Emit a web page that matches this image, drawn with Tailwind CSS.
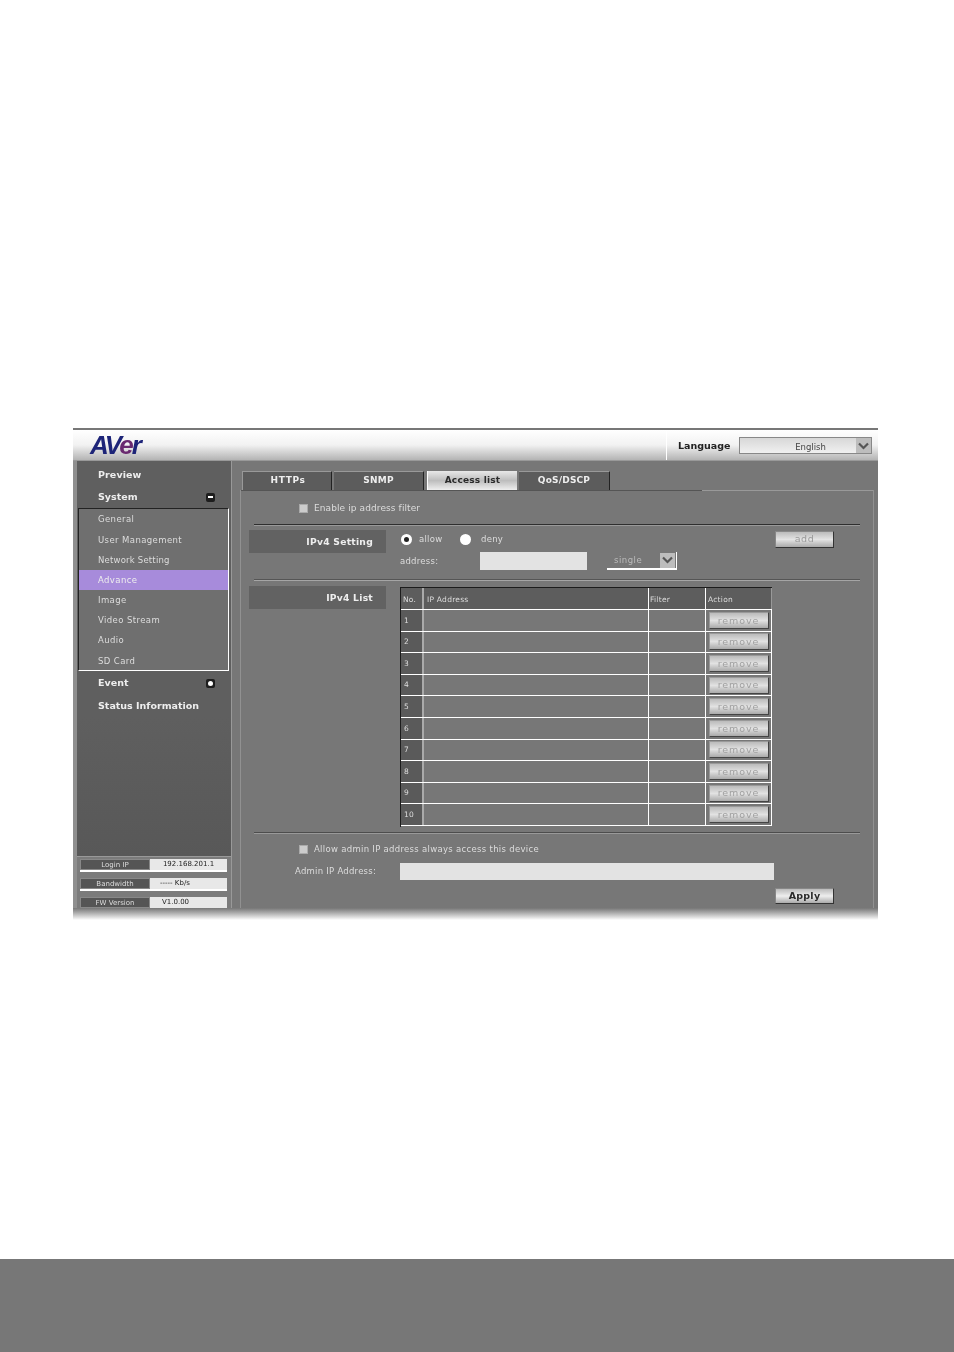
<!DOCTYPE html>
<html lang="en">
<head>
  <meta charset="UTF-8" />
  <title>AVer - Access list</title>
  <script src="https://cdn.jsdelivr.net/npm/@tailwindcss/browser@4"></script>
</head>
<body class="bg-white font-['DejaVu_Sans',sans-serif]">
<div class="w-[954px] h-[1352px] flex flex-col overflow-hidden">

  <div class="flex-1 pt-[428px] pl-[73px]">
    <div class="w-[805px] h-[480px] bg-[#777] flex flex-col blur-[0.45px]">

      <!-- Header -->
      <header class="h-[33px] shrink-0 border-t-2 border-[#777] border-b border-b-[#999] bg-gradient-to-b from-white via-[#f2f2f2] to-[#b4b4b4] flex items-center">
        <span class="ml-[17px] w-[576px] text-[26px] leading-none font-bold italic tracking-[-2px] text-[#1d2478] font-['Liberation_Sans',sans-serif]">AV<span class="text-[#6a2a70]">e</span>r</span>
        <div class="h-[29px] w-px bg-[#777] border-r border-white"></div>
        <span class="ml-[11px] w-[61px] text-[9.5px] font-bold text-[#222] pt-[3px]">Language</span>
        <div class="w-[133px] h-[17px] mt-[1px] border border-[#888] bg-gradient-to-b from-[#d8d8d8] to-[#f0f0f0] flex items-center">
          <span class="flex-1 text-center text-[8.5px] text-[#444] pl-[25px] pt-[3px]">English</span>
          <div class="w-[15px] h-[15px] bg-[#bdbdbd] flex items-center justify-center">
            <svg width="11" height="8" viewBox="0 0 11 8"><path d="M1 1.5 L5.5 6 L10 1.5" fill="none" stroke="#555" stroke-width="2.2"/></svg>
          </div>
        </div>
      </header>

      <div class="flex-1 flex min-h-0">
        <!-- Sidebar -->
        <aside class="w-[158px] shrink-0 flex border-l-[4px] border-[#8f8f8f]">
          <div class="w-[154px] bg-[#5f5f5f] flex flex-col text-[9.5px] font-bold text-[#eee]">
            <div class="h-[25px] pl-[21px] pt-[3px] flex items-center tracking-[0.1px]">Preview</div>
            <div class="h-[22px] pl-[21px] pr-[16px] flex items-center justify-between">
              <span>System</span>
              <span class="w-[9px] h-[9px] rounded-[2px] bg-[#1d1d1d] flex items-center justify-center"><span class="w-[5px] h-[2px] bg-white"></span></span>
            </div>
            <nav class="h-[163px] ml-[1px] w-[151px] bg-[#6f6f6f] border-l border-t border-[#222] border-r border-b border-r-white border-b-white font-normal text-[8.5px] text-[#ddd] tracking-[0.4px] flex flex-col">
              <div class="h-[20px] pl-[19px] flex items-center">General</div>
              <div class="h-[21px] pl-[19px] pt-[1px] flex items-center">User Management</div>
              <div class="h-[20px] pl-[19px] flex items-center tracking-[0.2px]">Network Setting</div>
              <div class="h-[20px] pl-[19px] flex items-center bg-[#a78bdb] text-[#eee]">Advance</div>
              <div class="h-[20px] pl-[19px] flex items-center">Image</div>
              <div class="h-[20px] pl-[19px] flex items-center">Video Stream</div>
              <div class="h-[20px] pl-[19px] flex items-center">Audio</div>
              <div class="h-[20px] pl-[19px] pt-[2px] flex items-center">SD Card</div>
            </nav>
            <div class="h-[25px] pl-[21px] pr-[16px] flex items-center justify-between">
              <span>Event</span>
              <span class="w-[9px] h-[9px] rounded-[2px] bg-[#1d1d1d] flex items-center justify-center"><span class="w-[5px] h-[5px] bg-white rounded-full"></span></span>
            </div>
            <div class="h-[21px] pl-[21px] flex items-center">Status Information</div>
            <div class="flex-1 bg-gradient-to-b from-[#5f5f5f] to-[#585858]"></div>
            <!-- Status boxes -->
            <div class="h-[52px] shrink-0 bg-[#7b7b7b] border-t border-[#999] pl-[3px] pr-[4px] pt-[2px] overflow-hidden flex flex-col gap-[6px] text-[7px] font-normal text-[#222]">
              <div class="h-[13px] shrink-0 flex border-b-2 border-white bg-[#e8e8e8]">
                <span class="w-[70px] bg-[#555] border border-[#888] text-[#ddd] text-center leading-[10px]">Login IP</span>
                <span class="flex-1 text-center leading-[11px]">192.168.201.1</span>
              </div>
              <div class="h-[13px] shrink-0 flex border-b-2 border-white bg-[#e8e8e8]">
                <span class="w-[70px] bg-[#555] border border-[#888] text-[#ddd] text-center leading-[10px]">Bandwidth</span>
                <span class="flex-1 pl-[10px] leading-[11px]">----- Kb/s</span>
              </div>
              <div class="h-[13px] shrink-0 flex border-b-2 border-white bg-[#e8e8e8]">
                <span class="w-[70px] bg-[#555] border border-[#888] text-[#ddd] text-center leading-[10px]">FW Version</span>
                <span class="flex-1 pl-[12px] leading-[11px]">V1.0.00</span>
              </div>
            </div>
          </div>
        </aside>

        <!-- Main -->
        <main class="flex-1 border-l border-[#999] pl-[1px] min-w-0 flex flex-col bg-[#777]">
          <!-- Tabs -->
          <div class="h-[29px] shrink-0 pt-[10px] pl-[9px] flex gap-[2px] text-[9px] font-bold tracking-[0.2px]">
            <div class="w-[90px] bg-[#5c5c5c] border-l border-t border-r border-[#999] border-r-[#222] text-[#eee] tracking-[0.6px] pl-[2px] flex items-center justify-center">HTTPs</div>
            <div class="w-[90px] bg-[#5c5c5c] border-t border-r border-[#999] border-r-[#222] text-[#eee] flex items-center justify-center">SNMP</div>
            <div class="w-[90px] ml-[1px] bg-gradient-to-b from-[#e8e8e8] via-[#bdbdbd] to-[#eee] border-l border-[#fff] text-[#2a2a2a] flex items-center justify-center">Access list</div>
            <div class="w-[91px] bg-[#5c5c5c] border-t border-r border-[#999] border-r-[#222] text-[#eee] flex items-center justify-center">QoS/DSCP</div>
          </div>

          <!-- Panel -->
          <div class="flex-1 ml-[7px] mr-[4px] border-l border-r border-[#919191] min-h-0 text-[8.5px] text-[#ddd] tracking-[0.25px]">
            <div class="h-px flex">
              <div class="w-[461px] bg-[#555]"></div>
              <div class="flex-1 bg-[#999]"></div>
            </div>
            <div class="h-[33px] pl-[58px] pt-[2px] flex items-center gap-[6px]">
              <span class="w-[9px] h-[9px] bg-[#ccc] border border-[#aaa]"></span>
              <span class="text-[9px] tracking-[0.1px]">Enable ip address filter</span>
            </div>
            <div class="h-[2px] ml-[13px] w-[606px] bg-[#2f2f2f] border-b border-[#999]"></div>

            <div class="h-[53px] pt-[4px] pl-[8px] flex">
              <div class="w-[137px] h-[23px] bg-[#626262] font-bold text-[9.2px] text-[#eee] flex items-center justify-end pr-[13px]">IPv4 Setting</div>
              <div class="ml-[14px] w-[434px] flex flex-col">
                <div class="h-[18px] flex items-center">
                  <span class="ml-[1px] w-[11px] h-[11px] rounded-full bg-white flex items-center justify-center"><span class="w-[5px] h-[5px] rounded-full bg-[#222]"></span></span>
                  <span class="ml-[7px] w-[41px]">allow</span>
                  <span class="w-[11px] h-[11px] rounded-full bg-white"></span>
                  <span class="ml-[10px] flex-1">deny</span>
                  <button class="w-[59px] h-[17px] bg-gradient-to-b from-[#bbb] via-[#e4e4e4] to-[#aaa] border border-[#888] border-b-[#333] border-r-[#333] text-[9.5px] text-[#999] tracking-[0.6px]">add</button>
                </div>
                <div class="mt-[4px] h-[18px] flex items-center">
                  <span class="w-[80px] pt-[1px]">address:</span>
                  <span class="w-[107px] h-[18px] bg-[#e3e3e3]"></span>
                  <div class="ml-[20px] w-[70px] h-[18px] bg-[#777] border-b-2 border-r border-white flex items-center pl-[7px] pr-[1px]">
                    <span class="flex-1 text-[#bbb] tracking-[0.5px] pt-[1px]">single</span>
                    <span class="w-[15px] h-[15px] bg-[#bdbdbd] flex items-center justify-center">
                      <svg width="11" height="8" viewBox="0 0 11 8"><path d="M1 1.5 L5.5 6 L10 1.5" fill="none" stroke="#555" stroke-width="2.2"/></svg>
                    </span>
                  </div>
                </div>
              </div>
            </div>
            <div class="h-[2px] ml-[13px] w-[606px] bg-[#555] border-b border-[#a5a5a5]"></div>

            <div class="pt-[5px] pl-[8px] flex h-[251px]">
              <div class="w-[137px] h-[23px] bg-[#626262] font-bold text-[9.2px] text-[#eee] flex items-center justify-end pr-[13px]">IPv4 List</div>
              <div id="ipTable" class="ml-[14px] mt-[1px] w-[372px] h-[240px] border-l border-t border-[#1c1c1c] text-[7.5px] flex flex-col"></div>
            </div>
            <div class="h-[2px] ml-[13px] w-[606px] bg-[#4d4d4d] border-b border-[#999]"></div>

            <div class="h-[29px] pl-[58px] pt-[1px] flex items-center gap-[6px]">
              <span class="w-[9px] h-[9px] bg-[#ccc] border border-[#aaa]"></span>
              <span class="tracking-[0.3px]">Allow admin IP address always access this device</span>
            </div>
            <div class="h-[17px] flex items-center">
              <span class="ml-[54px] w-[105px]">Admin IP Address:</span>
              <span class="w-[374px] h-[17px] bg-[#e3e3e3]"></span>
            </div>
            <div class="pl-[534px] pt-[8px]">
              <button class="w-[59px] h-[16px] bg-gradient-to-b from-[#bbb] via-[#eee] to-[#aaa] border border-[#888] border-b-[#333] border-r-[#333] text-[9.5px] font-bold text-[#2a2a2a] leading-none">Apply</button>
            </div>
          </div>
        </main>
      </div>
    </div>
    <!-- Soft shadow below the screenshot -->
    <div class="w-[805px] h-[12px] bg-gradient-to-b from-[#777] to-white"></div>
  </div>

  <!-- Bottom band -->
  <div class="h-[93px] shrink-0 bg-[#777]"></div>
</div>

<script>
  const rows = ["1", "2", "3", "4", "5", "6", "7", "8", "9", "10"];
  let html = `
    <div class="h-[22px] shrink-0 flex bg-[#5d5d5d] border-b border-white">
      <div class="w-[23px] pl-[2px] pt-[2px] border-r-2 border-[#aaa] flex items-center">No.</div>
      <div class="w-[225px] pl-[3px] pt-[2px] border-r border-white flex items-center">IP Address</div>
      <div class="w-[57px] pl-[1px] pt-[2px] border-r border-white flex items-center">Filter</div>
      <div class="flex-1 pl-[2px] pt-[2px] border-r border-[#999] flex items-center">Action</div>
    </div>`;
  rows.forEach(n => {
    html += `
    <div class="h-[21.6px] shrink-0 flex border-b border-white">
      <div class="w-[23px] pl-[3px] bg-[#5a5a5a] border-r-2 border-[#aaa] flex items-center">${n}</div>
      <div class="w-[225px] border-r border-white"></div>
      <div class="w-[57px] border-r border-white"></div>
      <div class="flex-1 border-r border-white flex items-center justify-center">
        <button class="w-[60px] h-[17px] bg-gradient-to-b from-[#bbb] via-[#e2e2e2] to-[#aaa] border border-[#999] border-b-[#444] border-r-[#444] text-[9.5px] text-[#a0a0a0] tracking-[0.9px] leading-none">remove</button>
      </div>
    </div>`;
  });
  document.getElementById("ipTable").innerHTML = html;
</script>
</body>
</html>
